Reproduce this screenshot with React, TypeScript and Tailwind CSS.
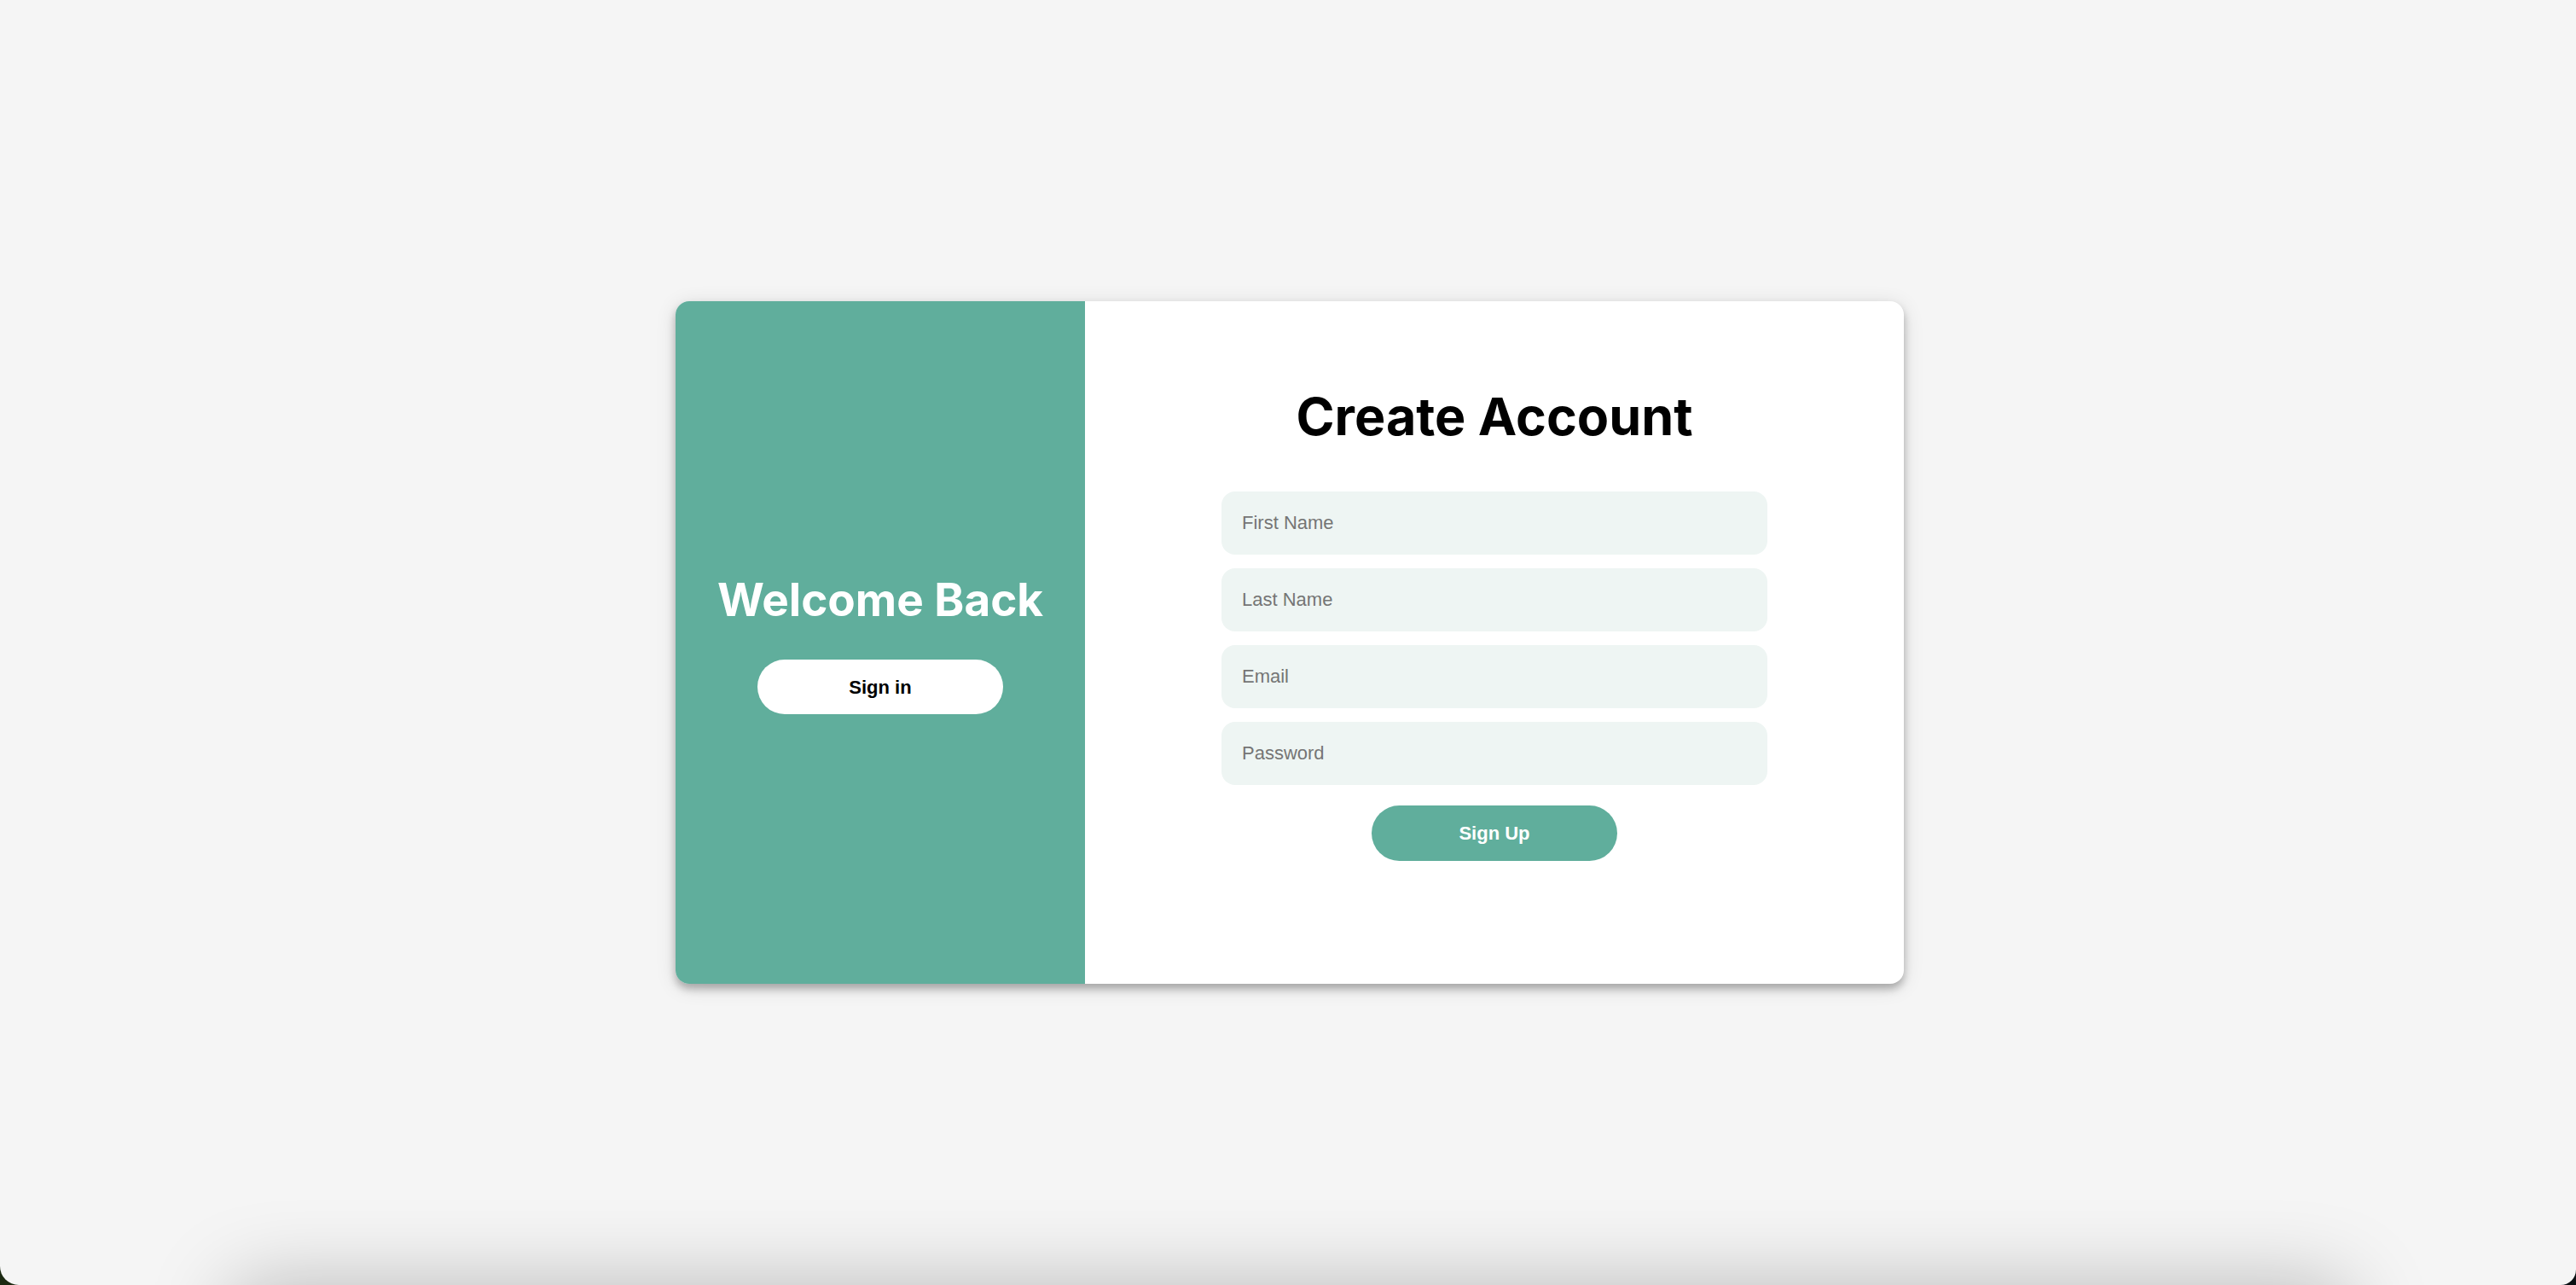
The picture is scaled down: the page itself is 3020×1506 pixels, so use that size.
import React from "react";

const fields = [
  { id: "first-name", label: "First Name", type: "text" },
  { id: "last-name", label: "Last Name", type: "text" },
  { id: "email", label: "Email", type: "email" },
  { id: "password", label: "Password", type: "password" },
];

export default function App() {
  return (
    <div className="bg-linear-to-r from-[#1c2a12] to-[#0b1013] font-['Inter',sans-serif]">
      <main className="relative flex min-h-screen items-center justify-center overflow-hidden rounded-br-[18px] rounded-bl-[22px] bg-[#f5f5f5] pl-1">
        <div className="flex min-h-[800px] w-full max-w-[1440px] overflow-hidden rounded-2xl bg-white shadow-[0_4px_24px_rgba(0,0,0,0.12),0_6px_10px_rgba(0,0,0,0.26)]">
          <section className="flex w-1/3 flex-col items-center justify-center gap-9 bg-[#60ae9c]">
            <h2 className="text-[53px] leading-[68px] font-bold whitespace-nowrap text-white">Welcome Back</h2>
            <button type="button" className="h-16 w-3/5 rounded-full bg-white font-['Liberation_Sans',sans-serif] text-[22px] font-bold text-black">
              Sign in
            </button>
          </section>
          <section className="flex w-2/3 flex-col items-center pt-[95px]">
            <h1 className="text-[61px] leading-[80px] font-bold whitespace-nowrap text-black">Create Account</h1>
            <form className="mt-12 flex w-2/3 flex-col items-center gap-4 font-['Liberation_Sans',sans-serif] text-[22px]">
              {fields.map((f) => (
                <input
                  key={f.id}
                  id={f.id}
                  name={f.id}
                  type={f.type}
                  aria-label={f.label}
                  placeholder={f.label}
                  className="h-[74px] w-full rounded-2xl bg-[#eef5f3] px-6 text-black outline-none placeholder:text-[#757575]"
                />
              ))}
              <button type="submit" className="mt-2 h-[65px] w-[45%] rounded-full bg-[#60ae9c] font-bold text-white">
                Sign Up
              </button>
            </form>
          </section>
        </div>
        <div aria-hidden="true" className="pointer-events-none absolute top-full right-[268px] left-[272px] h-40 rounded-3xl shadow-[0_0_96px_rgba(0,0,0,0.25)]" />
      </main>
    </div>
  );
}
